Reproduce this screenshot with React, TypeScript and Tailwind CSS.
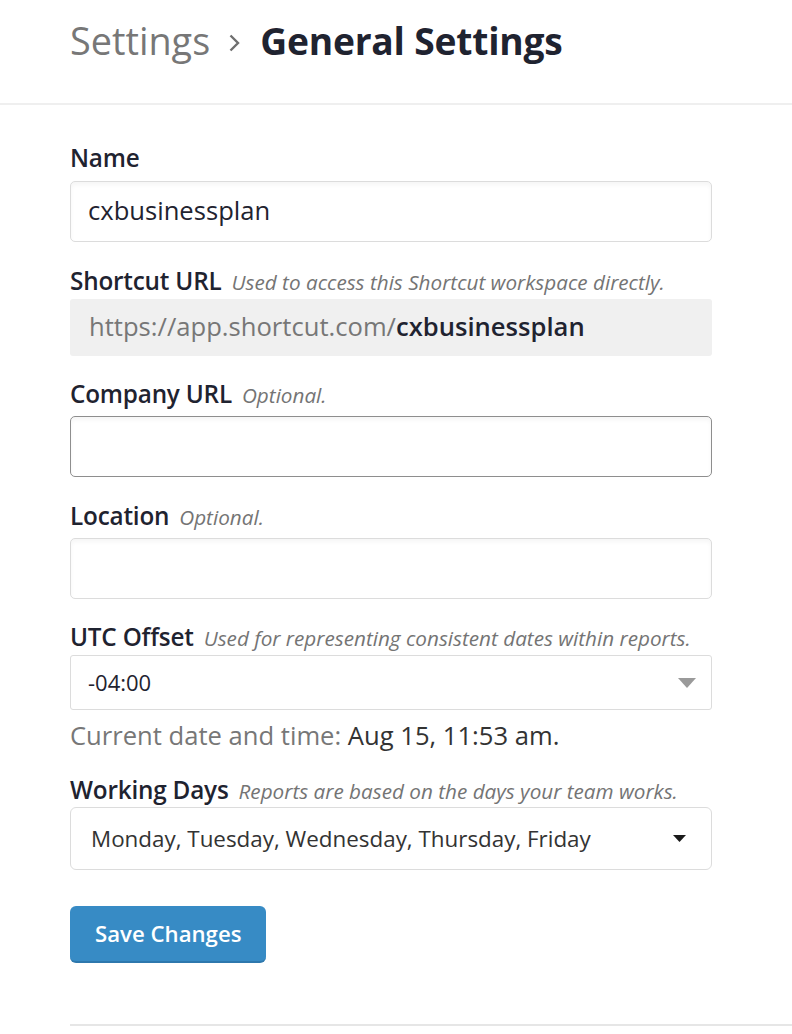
import React from "react";

const font = { fontFamily: '"Open Sans", "Noto Sans", sans-serif' };

function Label({ title, hint, className = "" }: { title: string; hint?: string; className?: string }) {
  return (
    <div className={`flex items-baseline h-[32px] leading-[32px] ${className}`}>
      <span className="text-[24.3px] font-semibold text-[#1f2330] tracking-[-0.2px]">{title}</span>
      {hint && <span className="ml-[10px] text-[20.7px] italic text-[#747474]">{hint}</span>}
    </div>
  );
}

export default function App() {
  return (
    <div className="bg-white min-h-[1034px] w-[792px] overflow-hidden" style={font}>
      <div className="h-[105px] border-b-2 border-[#efefef] flex items-center pl-[70px] pb-[21px]">
        <span className="text-[37.8px] text-[#777777] leading-none">Settings</span>
        <svg className="ml-[18px] mr-[19px] mt-[4px]" width="13" height="22" viewBox="0 0 13 22">
          <path d="M2.5 3.5 L10 11 L2.5 18.5" fill="none" stroke="#6f6f6f" strokeWidth="2.4" />
        </svg>
        <span className="text-[37.2px] font-bold text-[#1f2330] leading-none tracking-[-0.2px]">General Settings</span>
      </div>

      <div className="pl-[70px] w-[712px]">
        <Label title="Name" className="mt-[37px]" />
        <div className="mt-[7px] h-[61px] border border-[#dcdcdc] rounded-[5px] shadow-[inset_0_3px_4px_rgba(0,0,0,0.04)] flex items-center pl-[17px] text-[25.6px] text-[#1f2330]">
          cxbusinessplan
        </div>

        <Label title="Shortcut URL" hint="Used to access this Shortcut workspace directly." className="mt-[23px]" />
        <div className="mt-[2px] h-[57px] bg-[#f0f0f0] rounded-[3px] flex items-center pl-[19px] text-[25.6px]">
          <span className="text-[#777777]">https://app.shortcut.com/</span>
          <span className="font-semibold text-[#1f2330]">cxbusinessplan</span>
        </div>

        <Label title="Company URL" hint="Optional." className="mt-[22px]" />
        <div className="mt-[6px] h-[61px] border border-[#8e8e8e] rounded-[5px] shadow-[inset_0_3px_4px_rgba(0,0,0,0.04)]"></div>

        <Label title="Location" hint="Optional." className="mt-[23px]" />
        <div className="mt-[6px] h-[61px] border border-[#dcdcdc] rounded-[5px] shadow-[inset_0_3px_4px_rgba(0,0,0,0.04)]"></div>

        <Label title="UTC Offset" hint="Used for representing consistent dates within reports." className="mt-[22px]" />
        <div className="mt-[2px] h-[55px] border border-[#dcdcdc] rounded-[3px] flex items-center justify-between pl-[17px] pr-[15px] text-[22px] text-[#1f2330]">
          <span>-04:00</span>
          <svg width="18" height="10" viewBox="0 0 18 10">
            <path d="M0 0 H18 L9 10 Z" fill="#9a9a9a" />
          </svg>
        </div>

        <div className="mt-[8px] h-[36px] leading-[36px] text-[25.6px]">
          <span className="text-[#777777]">Current date and time: </span>
          <span className="text-[#333333]">Aug 15, 11:53 am.</span>
        </div>

        <Label title="Working Days" hint="Reports are based on the days your team works." className="mt-[20px]" />
        <div className="mt-[1px] h-[63px] border border-[#dcdcdc] rounded-[6px] flex items-center justify-between pl-[20px] pr-[25px] text-[22.4px] text-[#333333]">
          <span>Monday, Tuesday, Wednesday, Thursday, Friday</span>
          <svg width="13" height="7" viewBox="0 0 13 7">
            <path d="M0 0 H13 L6.5 7 Z" fill="#1a1a1a" />
          </svg>
        </div>

        <button className="mt-[36px] h-[57px] px-[25px] bg-[#378bc5] border-b-2 border-[#2e78ad] rounded-[6px] text-white text-[22.2px] font-semibold">
          Save Changes
        </button>
      </div>

      <div className="ml-[70px] mt-[61px] h-[2px] bg-[#e6e6e6]"></div>
    </div>
  );
}
